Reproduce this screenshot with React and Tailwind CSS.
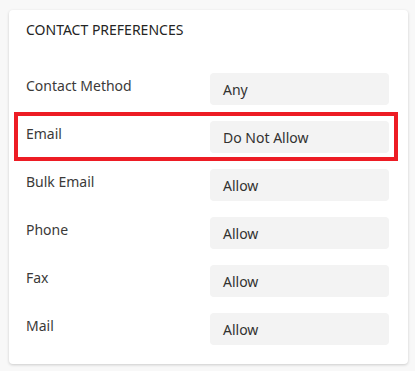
const ROWS = [
  { label: 'Contact Method', value: 'Any' },
  { label: 'Email', value: 'Do Not Allow', marked: true },
  { label: 'Bulk Email', value: 'Allow' },
  { label: 'Phone', value: 'Allow' },
  { label: 'Fax', value: 'Allow' },
  { label: 'Mail', value: 'Allow' },
]

function Row({ label, value, marked }) {
  return (
    <div className="relative flex items-start">
      <span className="w-[184px] shrink-0 pt-[3px] text-[14px] leading-5 text-[#3b3a39]">{label}</span>
      <div className="w-[179px] h-[32px] rounded-[4px] bg-[#f3f3f3] pl-[13px] flex items-center pt-[2px] text-[14px] leading-5 text-[#323130]">
        {value}
      </div>
      {marked && (
        <div className="absolute -left-[12px] -right-[9px] -top-[9px] -bottom-[8px] border-4 border-[#ed1c24] pointer-events-none" />
      )}
    </div>
  )
}

export default function App() {
  return (
    <div className="w-[415px] h-[371px] bg-[#f8f8f8] pt-[10px] pl-[9px] font-['Segoe_UI','Noto_Sans',sans-serif]">
      <div className="w-[399px] h-[354px] bg-white rounded-[4px] shadow-[0_1px_3px_rgba(0,0,0,0.18)] pl-[17px] pr-[19px] pt-[10px]">
        <h2 className="text-[14px] leading-5 font-normal text-[#242424]">CONTACT PREFERENCES</h2>
        <div className="mt-[33px] flex flex-col gap-[16px]">
          {ROWS.map((r) => (
            <Row key={r.label} {...r} />
          ))}
        </div>
      </div>
    </div>
  )
}
